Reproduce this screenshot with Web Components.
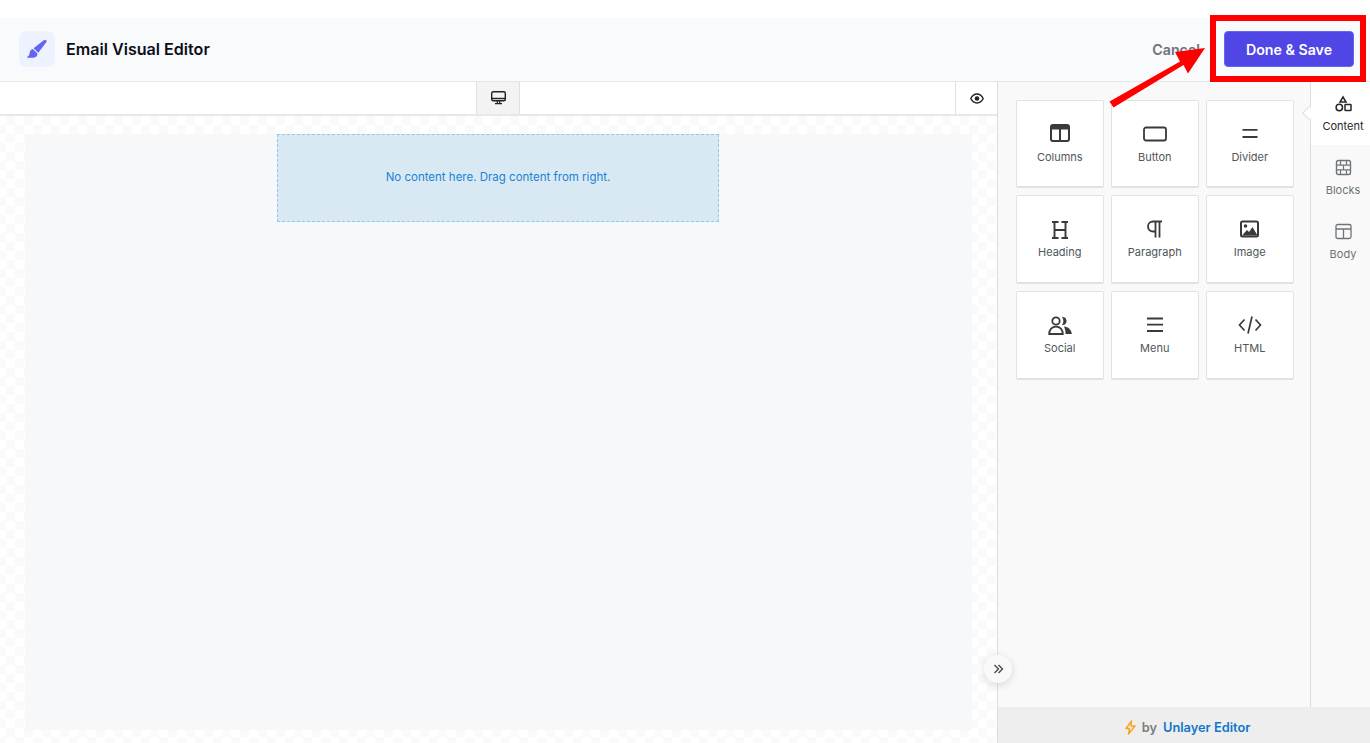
<!DOCTYPE html>
<html>
<head>
<meta charset="utf-8">
<title>Email Visual Editor</title>
<style>
  html, body { margin: 0; padding: 0; background: #fff; }
  body { font-family: Inter, "Liberation Sans", sans-serif; overflow: hidden; }
</style>
</head>
<body>
<editor-app></editor-app>

<script>
'use strict';

const ICONS = {
  columns: '<rect x="1" y="1" width="18" height="16" rx="2" fill="none" stroke="currentColor" stroke-width="2"/><rect x="1" y="1" width="18" height="4.5" fill="currentColor"/><path d="M10 4v13" stroke="currentColor" stroke-width="2"/>',
  button: '<rect x="1" y="3.5" width="22" height="13" rx="2" fill="none" stroke="currentColor" stroke-width="1.8"/>',
  divider: '<path d="M2.5 5.8h15M2.500 13h15" stroke="currentColor" stroke-width="1.8"/>',
  heading: '<path d="M3 3h6.500M3 19h6.500M12.500 3H19M12.500 19H19M5.500 3v16M16.500 3v16M5.500 11h11" fill="none" stroke="currentColor" stroke-width="1.900"/>',
  paragraph: '<path d="M17 2.500H8a5 5 0 0 0 0 10h2.500M10.500 2.500v16M14.500 2.500v16" fill="none" stroke="currentColor" stroke-width="1.800"/>',
  image: '<rect x="1" y="1.500" width="17" height="15" rx="1.500" fill="none" stroke="currentColor" stroke-width="2"/><circle cx="5.500" cy="6" r="1.800" fill="currentColor"/><path d="M2 15.500 7 10l2 2 3.500-5 5 8.500z" fill="currentColor"/>',
  social: '<circle cx="8" cy="5" r="3.700" fill="none" stroke="currentColor" stroke-width="1.800"/><path d="M14.500 1.300a3.700 3.700 0 0 1 0 7.400c.9-1 1.300-2.300 1.300-3.700s-.4-2.700-1.300-3.700z" fill="currentColor" stroke="currentColor" stroke-width=".8"/><path d="M1.200 18c0-4.600 2.800-7.300 6.800-7.300s6.800 2.700 6.800 7.300z" fill="none" stroke="currentColor" stroke-width="1.800"/><path d="M16 10.600c4.300.3 7.300 3.100 7.800 7.400H17.500c0-2.900-.5-5.300-1.500-7.400z" fill="currentColor"/>',
  menu: '<path d="M1 2.500h16M1 8.700h16M1 15h16" stroke="currentColor" stroke-width="1.800"/>',
  html: '<path d="M6.500 4.500 1.500 10l5 5.500M17.500 4.500 22.500 10l-5 5.500M14 1.500 10 18.500" fill="none" stroke="currentColor" stroke-width="1.700"/>',
  content: '<path d="M8 1.500 11 6.500H5z" fill="none" stroke="currentColor" stroke-width="1.500"/><circle cx="4.300" cy="12" r="3.200" fill="none" stroke="currentColor" stroke-width="1.500"/><rect x="10" y="9" width="6" height="6" rx=".6" fill="none" stroke="currentColor" stroke-width="1.500"/>',
  blocks: '<rect x="1.500" y="1" width="14" height="14" rx="1.800" fill="none" stroke="currentColor" stroke-width="1.400"/><path d="M1.500 5.700h14M1.500 10.300h14M5.500 1v4.700M11.500 1v4.700M8.500 5.700v4.600M5.500 10.300V15M11.500 10.300V15" fill="none" stroke="currentColor" stroke-width="1.200"/>',
  body: '<rect x="1" y="1" width="15" height="14" rx="1.800" fill="none" stroke="currentColor" stroke-width="1.300"/><path d="M1 5.500h15M8.500 5.500V15" fill="none" stroke="currentColor" stroke-width="1.300"/>'
};

class EditorHeader extends HTMLElement {
  constructor() {
    super();
    this.attachShadow({ mode: 'open' }).innerHTML = `
      <style>
        :host { display: flex; align-items: center; height: 62px; padding: 0 16px 1px 19px; background: #f9fafb; border-bottom: 1px solid #e5e7eb; }
        .logo { width: 36px; height: 36px; border-radius: 8px; background: #eef2ff; display: flex; align-items: center; justify-content: center; margin-right: 11px; }
        h1 { margin: 0; font-size: 16.100px; font-weight: 600; color: #0b0f1a; flex: 1; }
        .cancel { font-size: 14.200px; font-weight: 600; color: #6b7280; margin-right: 24px; }
        button { width: 130px; height: 36px; border: 1px solid #6366f1; border-radius: 4px; background: #4f46e5; color: #fff; font: 600 14.200px Inter, sans-serif; padding: 0; }
      </style>
      <div class="logo">
        <svg width="20" height="18" viewBox="0 0 20 18"><path d="M16.700.2 18.800 0c.9.100 1.100 1.200.5 2.300L11.300 12.800 6.600 8.200zM5.800 9l4.600 4.600c.2 2.600-1.600 4-3.900 4.200H.5C0 17.500 0 17 .6 16.600 2 15.800 2.400 14.800 2.600 13 2.800 10.800 4.200 9.400 5.800 9z" fill="#6366f1"/></svg>
      </div>
      <h1>Email Visual Editor</h1>
      <span class="cancel">Cancel</span>
      <button>Done &amp; Save</button>`;
  }
}

class EditorToolbar extends HTMLElement {
  constructor() {
    super();
    this.attachShadow({ mode: 'open' }).innerHTML = `
      <style>
        :host { display: flex; height: 34px; box-sizing: border-box; background: #fff; border-bottom: 2px solid #e8e8e8; color: #222; }
        .spacer { width: 476px; }
        .device { width: 42px; background: #f3f3f3; border: solid #e0e0e0; border-width: 0 1px; display: flex; align-items: center; justify-content: center; }
        .grow { flex: 1; }
        .preview { width: 41px; border-left: 1px solid #e0e0e0; display: flex; align-items: center; justify-content: center; }
      </style>
      <div class="spacer"></div>
      <div class="device">
        <svg width="15" height="14" viewBox="0 0 15 14"><rect x=".7" y=".7" width="13.600" height="9" rx="1.500" fill="none" stroke="currentColor" stroke-width="1.400"/><path d="M1 7.500h13" stroke="currentColor" stroke-width="1.400"/><path d="M6.300 10v2M8.700 10v2M4 12.700h7" stroke="currentColor" stroke-width="1.200"/></svg>
      </div>
      <div class="grow"></div>
      <div class="preview">
        <svg width="14" height="11" viewBox="0 0 14 11"><path d="M.8 5.500C2.300 2.500 4.500 1 7 1s4.700 1.500 6.200 4.500C11.700 8.500 9.500 10 7 10S2.300 8.500.8 5.500z" fill="none" stroke="currentColor" stroke-width="1.400"/><circle cx="7" cy="5.500" r="2.300" fill="currentColor"/></svg>
      </div>`;
  }
}

class EditorCanvas extends HTMLElement {
  constructor() {
    super();
    this.attachShadow({ mode: 'open' }).innerHTML = `
      <style>
        :host { display: block; flex: 1; box-sizing: border-box; padding: 18px 25px 13px; min-height: 0;
          background: repeating-conic-gradient(#fafafa 0 25%, #fff 0 50%) -3px 0 / 18px 18px; }
        .page { height: 100%; background: #f6f8fa; display: flex; justify-content: center; }
        .drop { width: 442px; height: 88px; margin-right: 1px; box-sizing: border-box; background: #d9e9f3; border: 1px dashed #8ccaeb; display: flex; align-items: center; justify-content: center; padding-bottom: 2px; color: #1a83d6; font-size: 11.500px; }
      </style>
      <div class="page"><div class="drop">No content here. Drag content from right.</div></div>`;
  }
}

class ToolCard extends HTMLElement {
  constructor() {
    super();
    const icon = ICONS[this.getAttribute('icon')];
    const w = this.getAttribute('w') || 20;
    const h = this.getAttribute('h') || 20;
    this.attachShadow({ mode: 'open' }).innerHTML = `
      <style>
        :host { display: flex; flex-direction: column; align-items: center; box-sizing: border-box; padding-top: 23px; background: #fff; border: 1px solid #e2e2e2; border-bottom-width: 2px; border-radius: 2px; color: #3a3a3a; }
        .icon { height: 20px; display: flex; align-items: center; justify-content: center; }
        .label { margin-top: 5px; font-size: 11px; line-height: 16px; color: #505659; }
      </style>
      <div class="icon"><svg width="${w}" height="${h}" viewBox="0 0 ${w} ${h}">${icon}</svg></div>
      <div class="label"><slot></slot></div>`;
  }
}

class SideTab extends HTMLElement {
  constructor() {
    super();
    const icon = ICONS[this.getAttribute('icon')];
    this.attachShadow({ mode: 'open' }).innerHTML = `
      <style>
        :host { display: flex; flex-direction: column; align-items: center; height: 64px; box-sizing: border-box; padding: 13px 0 0 5px; color: #6e7478; position: relative; }
        :host([active]) { background: #fff; color: #23282b; height: 63px; margin-bottom: 1px; }
        svg { display: block; }
        .label { margin-top: 6px; font-size: 11px; line-height: 16px; }
        .notch { display: none; position: absolute; left: -7px; top: 26px; width: 10px; height: 10px; background: #fff; border: solid #ddd; border-width: 0 0 1px 1px; transform: rotate(45deg); box-sizing: border-box; }
        :host([active]) .notch { display: block; }
      </style>
      <div class="notch"></div>
      <svg width="17" height="17" viewBox="0 0 17 16">${icon}</svg>
      <div class="label"><slot></slot></div>`;
  }
}

class EditorSidebar extends HTMLElement {
  constructor() {
    super();
    this.attachShadow({ mode: 'open' }).innerHTML = `
      <style>
        :host { display: flex; flex-direction: column; width: 373px; flex: none; box-sizing: border-box; border-left: 1px solid #ddd; background: #f9f9f9; position: relative; }
        .top { flex: 1; display: flex; min-height: 0; }
        .panel { flex: 1; padding: 18px 0 0 18px; }
        .grid { display: grid; grid-template-columns: repeat(3, 87.500px); grid-template-rows: 88px 89px 89px; gap: 7px 7.500px; }
        .tabs { width: 59px; border-left: 1px solid #ddd; flex: none; }
        footer { height: 36px; box-sizing: border-box; padding: 4px 0 0 6px; background: #eeeeee; display: flex; align-items: center; justify-content: center; font-size: 12.800px; font-weight: 600; color: #7c7c7c; }
        footer svg { margin-right: 5px; }
        footer b { font-weight: 600; color: #1277c9; margin-left: 6px; }
        .collapse { position: absolute; left: -14px; bottom: 60px; width: 28px; height: 28px; border-radius: 50%; background: #f9f9f9; box-shadow: 0 2px 8px rgba(0,0,0,.14); display: flex; align-items: center; justify-content: center; color: #444; }
      </style>
      <div class="top">
        <div class="panel">
          <div class="grid">
            <tool-card icon="columns">Columns</tool-card>
            <tool-card icon="button" w="24">Button</tool-card>
            <tool-card icon="divider">Divider</tool-card>
            <tool-card icon="heading" w="22" h="21">Heading</tool-card>
            <tool-card icon="paragraph" h="21">Paragraph</tool-card>
            <tool-card icon="image" w="19" h="18">Image</tool-card>
            <tool-card icon="social" w="24" h="19">Social</tool-card>
            <tool-card icon="menu" w="18" h="18">Menu</tool-card>
            <tool-card icon="html" w="24">HTML</tool-card>
          </div>
        </div>
        <div class="tabs">
          <side-tab icon="content" active>Content</side-tab>
          <side-tab icon="blocks">Blocks</side-tab>
          <side-tab icon="body">Body</side-tab>
        </div>
      </div>
      <footer>
        <svg width="13" height="15" viewBox="0 0 13 15"><path d="M7.500 1 2 8.500h3.500L4.500 14 11 6H7z" fill="none" stroke="#f5a623" stroke-width="1.500" stroke-linejoin="round"/></svg>
        by <b>Unlayer Editor</b>
      </footer>
      <div class="collapse">
        <svg width="11" height="10" viewBox="0 0 11 10"><path d="M1.500 1l4 4-4 4M5.500 1l4 4-4 4" fill="none" stroke="currentColor" stroke-width="1.300"/></svg>
      </div>`;
  }
}

class CalloutMarks extends HTMLElement {
  constructor() {
    super();
    this.attachShadow({ mode: 'open' }).innerHTML = `
      <style>
        :host { display: block; position: absolute; inset: 0; pointer-events: none; }
        .box { position: absolute; left: 1210px; top: 15px; width: 156px; height: 67px; box-sizing: border-box; border: 6px solid #ff0000; }
        svg { position: absolute; left: 0; top: 0; }
      </style>
      <div class="box"></div>
      <svg width="1370" height="743"><polygon points="1109.500,101.500 1180,61.500 1175,52 1205,48 1188,73.500 1183.500,65 1113.500,107.500" fill="#ff0000"/></svg>`;
  }
}

class EditorApp extends HTMLElement {
  constructor() {
    super();
    this.attachShadow({ mode: 'open' }).innerHTML = `
      <style>
        :host { display: flex; flex-direction: column; height: 743px; padding-top: 18px; box-sizing: border-box; position: relative; }
        .main { flex: 1; display: flex; min-height: 0; }
        .left { flex: 1; min-width: 0; display: flex; flex-direction: column; }
      </style>
      <editor-header></editor-header>
      <div class="main">
        <div class="left">
          <editor-toolbar></editor-toolbar>
          <editor-canvas></editor-canvas>
        </div>
        <editor-sidebar></editor-sidebar>
      </div>
      <callout-marks></callout-marks>`;
  }
}

customElements.define('editor-header', EditorHeader);
customElements.define('editor-toolbar', EditorToolbar);
customElements.define('editor-canvas', EditorCanvas);
customElements.define('tool-card', ToolCard);
customElements.define('side-tab', SideTab);
customElements.define('editor-sidebar', EditorSidebar);
customElements.define('callout-marks', CalloutMarks);
customElements.define('editor-app', EditorApp);
</script>
</body>
</html>
